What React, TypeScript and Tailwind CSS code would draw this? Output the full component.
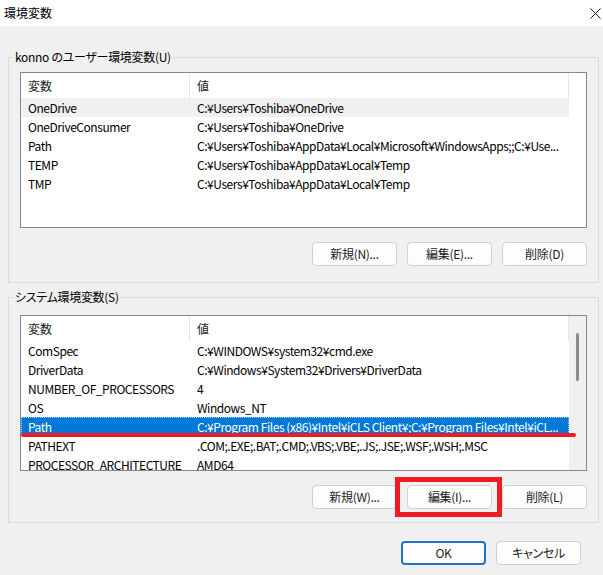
import React from "react";

type Row = { name: string; value: string };

const userRows: Row[] = [
  { name: "OneDrive", value: "C:¥Users¥Toshiba¥OneDrive" },
  { name: "OneDriveConsumer", value: "C:¥Users¥Toshiba¥OneDrive" },
  { name: "Path", value: "C:¥Users¥Toshiba¥AppData¥Local¥Microsoft¥WindowsApps;;C:¥Use..." },
  { name: "TEMP", value: "C:¥Users¥Toshiba¥AppData¥Local¥Temp" },
  { name: "TMP", value: "C:¥Users¥Toshiba¥AppData¥Local¥Temp" },
];

const sysRows: Row[] = [
  { name: "ComSpec", value: "C:¥WINDOWS¥system32¥cmd.exe" },
  { name: "DriverData", value: "C:¥Windows¥System32¥Drivers¥DriverData" },
  { name: "NUMBER_OF_PROCESSORS", value: "4" },
  { name: "OS", value: "Windows_NT" },
  { name: "Path", value: "C:¥Program Files (x86)¥Intel¥iCLS Client¥;C:¥Program Files¥Intel¥iCL..." },
  { name: "PATHEXT", value: ".COM;.EXE;.BAT;.CMD;.VBS;.VBE;.JS;.JSE;.WSF;.WSH;.MSC" },
  { name: "PROCESSOR_ARCHITECTURE", value: "AMD64" },
];

function ListView({
  rows,
  sel,
  active,
  scroll,
}: {
  rows: Row[];
  sel: number;
  active: boolean;
  scroll: boolean;
}) {
  return (
    <div className="ml-[11px] w-[567px] h-[156px] border border-[#828790] bg-white flex overflow-hidden">
      <div className="w-[548px] flex flex-col overflow-hidden shrink-0">
        <div className="h-[25px] flex shrink-0 text-[#1a1a1a]">
          <div className="w-[169px] border-r border-[#e5e5e5] pl-[7px] flex items-center">変数</div>
          <div className="w-[379px] border-r border-[#e5e5e5] pl-[7px] flex items-center">値</div>
        </div>
        {rows.map((r, i) => {
          const isSel = i === sel;
          const cls = isSel
            ? active
              ? "bg-[#0078d7] text-white outline outline-1 outline-dotted outline-[#9fcdf2] -outline-offset-1"
              : "bg-[#f0f0f0] text-black"
            : "text-black";
          return (
            <div key={i} className={"h-[19px] shrink-0 flex items-center tracking-[-0.45px] " + cls}>
              <div className="w-[169px] pl-[7px] whitespace-nowrap overflow-hidden shrink-0">{r.name}</div>
              <div className="w-[379px] pl-[7px] whitespace-nowrap overflow-hidden shrink-0">{r.value}</div>
            </div>
          );
        })}
      </div>
      {scroll ? (
        <div className="w-[17px] bg-[#f0f0f0] shrink-0">
          <div className="ml-[7px] mt-[17px] w-[3px] h-[48px] rounded-full bg-[#8b8b8b]" />
        </div>
      ) : null}
    </div>
  );
}

function Btn({ children, primary }: { children: React.ReactNode; primary?: boolean }) {
  return (
    <div
      className={
        "w-[85px] h-[24px] rounded-[4px] bg-[#fdfdfd] flex items-center justify-center text-[#1b1b1b] tracking-[-0.3px] " +
        (primary ? "border-2 border-[#1f74c8]" : "border border-[#d0d0d0]")
      }
    >
      {children}
    </div>
  );
}

export default function App() {
  return (
    <div className="relative w-[603px] h-[575px] bg-[#f0f0f0] overflow-hidden font-['Noto_Sans_CJK_JP',sans-serif] [font-feature-settings:'palt'] text-[12px] leading-[16px]">
      {/* title bar */}
      <div className="h-[26px] bg-white flex items-center justify-between pl-[4px] pr-[2px]">
        <span className="text-[12px] text-black">環境変数</span>
        <svg width="11" height="11" viewBox="0 0 11 11" className="mt-[1px]">
          <path d="M0.5 0.5 L10.5 10.5 M10.5 0.5 L0.5 10.5" stroke="#1a1a1a" strokeWidth="1" fill="none" />
        </svg>
      </div>

      {/* user group */}
      <div className="mt-[31px] ml-[8px] w-[591px] h-[226px] border border-[#dadada]">
        <div className="-mt-[9px] ml-[4px] w-fit px-[2px] bg-[#f0f0f0] text-black tracking-[-0.3px]">konno のユーザー環境変数(U)</div>
        <div className="mt-[7px]">
          <ListView rows={userRows} sel={0} active={false} scroll={false} />
        </div>
        <div className="mt-[14px] w-[578px] flex justify-end gap-[10px]">
          <Btn>新規(N)...</Btn>
          <Btn>編集(E)...</Btn>
          <Btn>削除(D)</Btn>
        </div>
      </div>

      {/* system group */}
      <div className="mt-[14px] ml-[8px] w-[591px] h-[226px] border border-[#dadada]">
        <div className="-mt-[9px] ml-[4px] w-fit px-[2px] bg-[#f0f0f0] text-black tracking-[-0.3px]">システム環境変数(S)</div>
        <div className="mt-[10px]">
          <ListView rows={sysRows} sel={4} active={true} scroll={true} />
        </div>
        <div className="mt-[14px] w-[578px] flex justify-end gap-[10px]">
          <Btn>新規(W)...</Btn>
          <Btn>編集(I)...</Btn>
          <Btn>削除(L)</Btn>
        </div>
      </div>

      {/* dialog buttons */}
      <div className="mt-[18px] w-[581px] flex justify-end gap-[10px]">
        <Btn primary>OK</Btn>
        <Btn>キャンセル</Btn>
      </div>

      {/* annotations */}
      <div className="absolute left-[21px] top-[433px] w-[555px] h-[4px] rounded-full bg-[#ed1c24]" />
      <div className="absolute left-[395px] top-[477px] w-[107px] h-[40px] border-[5px] border-[#ed1c24]" />
    </div>
  );
}
